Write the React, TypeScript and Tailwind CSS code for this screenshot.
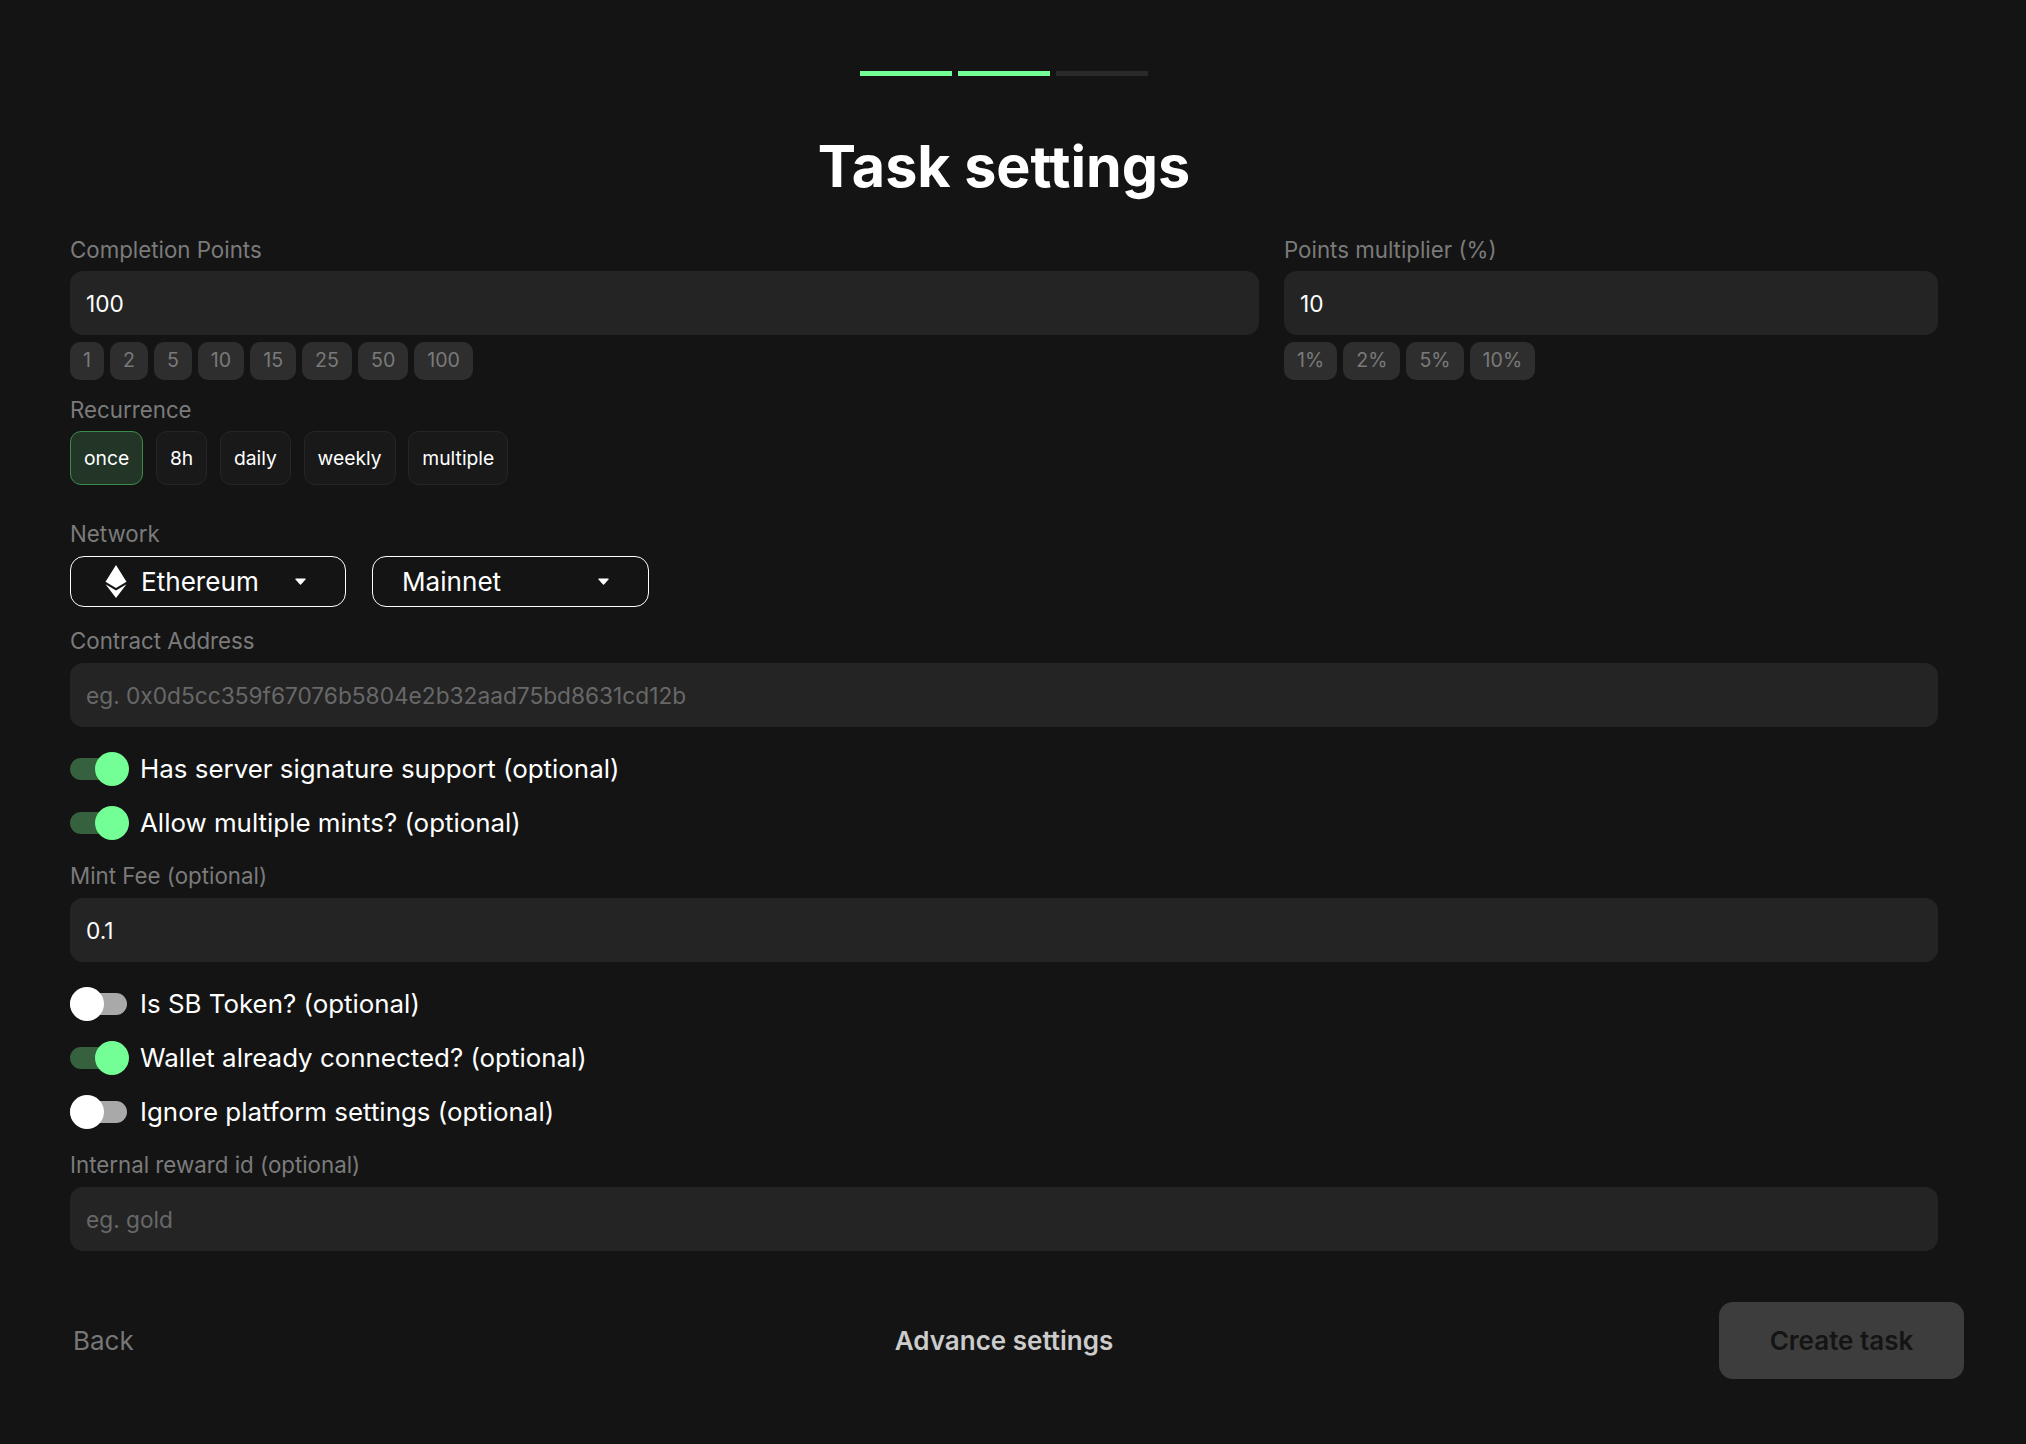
import React from "react";

function Field({ label, value, placeholder, raised }: { label: string; value?: string; placeholder?: string; raised?: boolean }) {
  return (
    <div className="flex flex-col">
      <Label text={label} raised={raised} />
      <Input value={value} placeholder={placeholder} />
    </div>
  );
}

function Label({ text, raised }: { text: string; raised?: boolean }) {
  return (
    <div className={raised ? "h-[27px] mb-[9px] text-[22.3px] leading-[27px] text-[#7b7b7b]" : "h-[27px] mb-[8px] text-[22.3px] leading-[27px] text-[#7b7b7b]"}>
      {text}
    </div>
  );
}

function Input({ value, placeholder }: { value?: string; placeholder?: string }) {
  return (
    <input
      readOnly
      defaultValue={value}
      placeholder={placeholder}
      className="w-full h-[64px] rounded-[13px] bg-[#242424] px-[16px] pt-[1px] text-[22.7px] text-white outline-none placeholder:text-[#686868]"
    />
  );
}

function Chips({ items }: { items: string[] }) {
  return (
    <div className="flex gap-[6px] mt-[7px]">
      {items.map((t) => (
        <div key={t} className="h-[38px] px-[13px] rounded-[10px] bg-[#2e2e2e] text-[19.6px] text-[#7a7a7a] flex items-center">
          {t}
        </div>
      ))}
    </div>
  );
}

function Toggle({ on, label }: { on?: boolean; label: string }) {
  return (
    <div className="flex items-center h-[34px] gap-[10px]">
      <div className="relative w-[60px] h-[34px] shrink-0">
        <div className={on ? "absolute left-0 top-[6px] w-[55px] h-[22px] rounded-full bg-[#35613f]" : "absolute left-0 top-[6px] w-[57px] h-[22px] rounded-full bg-[#a9a9a9]"} />
        <div className={on ? "absolute left-[25px] top-0 w-[34px] h-[34px] rounded-full bg-[#74ff96]" : "absolute left-0 top-0 w-[34px] h-[34px] rounded-full bg-white"} />
      </div>
      <span className="text-[25.9px] leading-[34px] text-white">{label}</span>
    </div>
  );
}

function Caret() {
  return (
    <svg width="11" height="7" viewBox="0 0 11 7" className="shrink-0">
      <path d="M1 0.5h9a0.7 0.7 0 0 1 .5 1.1L6 6.4a0.7 0.7 0 0 1-1 0L0.5 1.6A0.7 0.7 0 0 1 1 0.5z" fill="#fff" />
    </svg>
  );
}

function EthIcon() {
  return (
    <svg width="22" height="33" viewBox="0 0 22 33" className="shrink-0">
      <path d="M11 0L21.5 16.8L11 23L0.5 16.8Z" fill="#fff" />
      <path d="M0.5 19.2L11 25.4L21.5 19.2L11 33Z" fill="#fff" />
    </svg>
  );
}

function Select({ icon, label }: { icon?: boolean; label: string }) {
  return (
    <div className={icon ? "w-[276px] h-[51px] rounded-[14px] border border-white flex items-center pl-[34px] pr-[39px]" : "w-[277px] h-[51px] rounded-[14px] border border-white flex items-center pl-[29px] pr-[39px]"}>
      {icon ? <EthIcon /> : null}
      <span className={icon ? "ml-[14px] text-[26.1px] text-white flex-1" : "text-[26.1px] text-white flex-1"}>{label}</span>
      <Caret />
    </div>
  );
}

function Recur({ label, active }: { label: string; active?: boolean }) {
  return (
    <div
      className={
        active
          ? "h-[54px] px-[13px] rounded-[11px] border border-[#3d8a4d] bg-[#223526] text-[19.3px] text-white flex items-center"
          : "h-[54px] px-[13px] rounded-[11px] border border-[#262626] bg-[#191919] text-[19.3px] text-white flex items-center"
      }
    >
      {label}
    </div>
  );
}

export default function App() {
  return (
    <div className="min-h-[1444px] bg-[#141414] font-['Inter',sans-serif]">
      <div className="ml-[44px] w-[1920px] pt-[71px] flex flex-col">
        <div className="flex justify-center gap-[6px]">
          <div className="w-[92px] h-[5px] bg-[#74ff96]" />
          <div className="w-[92px] h-[5px] bg-[#74ff96]" />
          <div className="w-[92px] h-[5px] bg-[#2a2a2a]" />
        </div>
        <h1 className="mt-[50px] h-[80px] text-center text-[57.4px] leading-[80px] font-bold text-white">Task settings</h1>
        <div className="px-[26px] mt-[30px] flex flex-col">
          <div className="flex gap-[25px]">
            <div className="flex-1 min-w-0">
              <Field label="Completion Points" value="100" />
              <Chips items={["1", "2", "5", "10", "15", "25", "50", "100"]} />
            </div>
            <div className="w-[654px]">
              <Field label="Points multiplier (%)" value="10" />
              <Chips items={["1%", "2%", "5%", "10%"]} />
            </div>
          </div>

          <div className="mt-[16px]">
            <Label text="Recurrence" />
            <div className="flex gap-[12.7px]">
              <Recur label="once" active />
              <Recur label="8h" />
              <Recur label="daily" />
              <Recur label="weekly" />
              <Recur label="multiple" />
            </div>
          </div>

          <div className="mt-[35px]">
            <Label text="Network" />
            <div className="flex gap-[26px] pt-[1px]">
              <Select icon label="Ethereum" />
              <Select label="Mainnet" />
            </div>
          </div>

          <div className="mt-[20px]">
            <Field raised label="Contract Address" placeholder="eg. 0x0d5cc359f67076b5804e2b32aad75bd8631cd12b" />
          </div>

          <div className="mt-[25px] flex flex-col gap-[20px]">
            <Toggle on label="Has server signature support (optional)" />
            <Toggle on label="Allow multiple mints? (optional)" />
          </div>

          <div className="mt-[22px]">
            <Field raised label="Mint Fee (optional)" value="0.1" />
          </div>

          <div className="mt-[25px] flex flex-col gap-[20px]">
            <Toggle label="Is SB Token? (optional)" />
            <Toggle on label="Wallet already connected? (optional)" />
            <Toggle label="Ignore platform settings (optional)" />
          </div>

          <div className="mt-[22px]">
            <Field raised label="Internal reward id (optional)" placeholder="eg. gold" />
          </div>
        </div>

        <div className="mt-[51px] grid grid-cols-3 items-center">
          <span className="justify-self-start pl-[29px] text-[26px] text-[#777777]">Back</span>
          <span className="justify-self-center text-[26px] font-semibold text-[#cccccc]">Advance settings</span>
          <div className="justify-self-end w-[245px] h-[77px] rounded-[14px] bg-[#3d3d3d] flex items-center justify-center text-[26px] font-semibold text-[#141414]">
            Create task
          </div>
        </div>
      </div>
    </div>
  );
}
